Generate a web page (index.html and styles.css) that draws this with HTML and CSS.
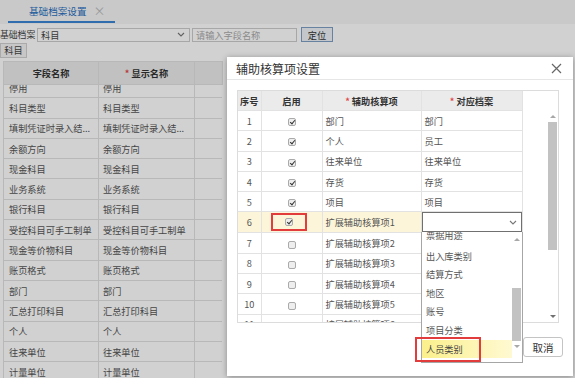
FILE: index.html
```html
<!DOCTYPE html>
<html lang="zh-CN">
<head>
    <meta charset="UTF-8">
    <meta name="viewport" content="width=device-width, initial-scale=1.0">
    <title>基础档案设置</title>
    <link rel="stylesheet" href="styles.css">
</head>
<body>
<div class="page">
    <div class="tabbar">
        <div class="tab">基础档案设置<span class="tab-x">×</span></div>
    </div>

    <div class="toolbar">
        <span class="label">基础档案</span>
        <div class="select">科目
            <svg width="8" height="5" viewBox="0 0 8 5"><path d="M1 1l3 3 3-3" fill="none" stroke="#777" stroke-width="1.1"/></svg>
        </div>
        <div class="search">请输入字段名称</div>
        <button class="btn-locate">定位</button>
    </div>

    <div class="subtabs"><span class="subtab">科目</span></div>

    <div class="grid">
        <table class="grid-head">
            <colgroup><col style="width:95px"><col style="width:96px"><col style="width:28px"></colgroup>
            <tr>
                <th>字段名称</th>
                <th><i class="req">*</i>显示名称</th>
                <th></th>
            </tr>
        </table>
        <div class="grid-body">
            <table>
                <colgroup><col style="width:95px"><col style="width:96px"><col style="width:28px"></colgroup>
                <tr><td>停用</td><td>停用</td><td></td></tr>
                <tr><td>科目类型</td><td>科目类型</td><td></td></tr>
                <tr><td>填制凭证时录入结...</td><td>填制凭证时录入结...</td><td></td></tr>
                <tr><td>余额方向</td><td>余额方向</td><td></td></tr>
                <tr><td>现金科目</td><td>现金科目</td><td></td></tr>
                <tr><td>业务系统</td><td>业务系统</td><td></td></tr>
                <tr><td>银行科目</td><td>银行科目</td><td></td></tr>
                <tr><td>受控科目可手工制单</td><td>受控科目可手工制单</td><td></td></tr>
                <tr><td>现金等价物科目</td><td>现金等价物科目</td><td></td></tr>
                <tr><td>账页格式</td><td>账页格式</td><td></td></tr>
                <tr><td>部门</td><td>部门</td><td></td></tr>
                <tr><td>汇总打印科目</td><td>汇总打印科目</td><td></td></tr>
                <tr><td>个人</td><td>个人</td><td></td></tr>
                <tr><td>往来单位</td><td>往来单位</td><td></td></tr>
                <tr><td>计量单位</td><td>计量单位</td><td></td></tr>
            </table>
        </div>
    </div>
</div>

<div class="mask"></div>

<div class="modal">
    <div class="modal-head">
        <span class="modal-title">辅助核算项设置</span>
        <svg class="modal-close" width="11" height="11" viewBox="0 0 11 11"><path d="M1 1l9 9M10 1l-9 9" stroke="#666" stroke-width="1.2"/></svg>
    </div>

    <div class="modal-body">
        <div class="assist">
            <table class="assist-table">
                <colgroup><col style="width:23px"><col style="width:61px"><col style="width:99px"><col style="width:101px"></colgroup>
                <tr>
                    <th>序号</th>
                    <th>启用</th>
                    <th><i class="req">*</i>辅助核算项</th>
                    <th><i class="req">*</i>对应档案</th>
                </tr>
                <tr><td class="num">1</td><td class="chk"><span class="cb on"></span></td><td>部门</td><td>部门</td></tr>
                <tr><td class="num">2</td><td class="chk"><span class="cb on"></span></td><td>个人</td><td>员工</td></tr>
                <tr><td class="num">3</td><td class="chk"><span class="cb on"></span></td><td>往来单位</td><td>往来单位</td></tr>
                <tr><td class="num">4</td><td class="chk"><span class="cb on"></span></td><td>存货</td><td>存货</td></tr>
                <tr><td class="num">5</td><td class="chk"><span class="cb on"></span></td><td>项目</td><td>项目</td></tr>
                <tr class="current">
                    <td class="num">6</td>
                    <td class="chk"><span class="mark-cb"><span class="cb on"></span></span></td>
                    <td>扩展辅助核算项1</td>
                    <td class="editing">
                        <div class="cell-select">
                            <svg width="8" height="5" viewBox="0 0 8 5"><path d="M1 1l3 3 3-3" fill="none" stroke="#777" stroke-width="1.1"/></svg>
                        </div>
                    </td>
                </tr>
                <tr><td class="num">7</td><td class="chk"><span class="cb"></span></td><td>扩展辅助核算项2</td><td></td></tr>
                <tr><td class="num">8</td><td class="chk"><span class="cb"></span></td><td>扩展辅助核算项3</td><td></td></tr>
                <tr><td class="num">9</td><td class="chk"><span class="cb"></span></td><td>扩展辅助核算项4</td><td></td></tr>
                <tr><td class="num">10</td><td class="chk"><span class="cb"></span></td><td>扩展辅助核算项5</td><td></td></tr>
                <tr><td class="num">11</td><td class="chk"><span class="cb"></span></td><td>扩展辅助核算项6</td><td></td></tr>
            </table>
            <div class="vscroll">
                <span class="arrow-up"></span>
                <span class="thumb"></span>
                <span class="fill"></span>
                <span class="arrow-down"></span>
            </div>
        </div>
    </div>

    <div class="modal-foot">
        <button class="btn">确定</button>
        <button class="btn">取消</button>
    </div>

    <div class="dropdown">
        <ul class="options">
            <li class="cut">票据用途</li>
            <li>出入库类别</li>
            <li>结算方式</li>
            <li>地区</li>
            <li>账号</li>
            <li>项目分类</li>
            <li class="hover">人员类别</li>
        </ul>
        <div class="dd-scroll">
            <span class="arrow-up"></span>
            <span class="dd-thumb"></span>
            <span class="arrow-down"></span>
        </div>
    </div>
    <div class="mark-option"></div>
</div>
</body>
</html>
```

FILE: styles.css
```css
*{
    margin: 0;
    padding: 0;
    box-sizing: border-box;
}

body{
    width: 575px;
    height: 378px;
    overflow: hidden;
    position: relative;
    background: #fff;
    color: #444;
    font-family: "Noto Sans CJK SC", "Noto Sans", sans-serif;
    font-size: 9.2px;
}

i.req{
    font-style: normal;
    color: #e04848;
    margin-right: 2px;
}

/* background page */

.page{
    width: 575px;
    height: 378px;
}

.tabbar{
    height: 24px;
    background: #f6f6f6;
    padding-left: 8px;
}

.tab{
    width: 107px;
    height: 23px;
    padding-left: 21px;
    border-bottom: 2px solid #3a86d6;
    color: #2a70c0;
    font-size: 9.6px;
    display: flex;
    align-items: center;
}

.tab-x{
    color: #bbb;
    font-size: 12px;
    margin-left: 7px;
}

.toolbar{
    height: 15px;
    margin-top: 3px;
    display: flex;
    align-items: center;
}

.label{
    width: 37px;
    font-size: 8.8px;
    white-space: nowrap;
}

.select{
    width: 153px;
    height: 14px;
    border: 1px solid #ccc;
    background: #fff;
    padding: 0 4px 0 3px;
    display: flex;
    align-items: center;
    justify-content: space-between;
}

.search{
    width: 105px;
    height: 14px;
    margin-left: 2px;
    border: 1px solid #ccc;
    background: #fff;
    color: #aaa;
    padding-left: 3px;
    line-height: 12px;
}

.btn-locate{
    width: 32px;
    height: 15px;
    margin-left: 4px;
    border: 1px solid #7e9fc4;
    background: #eef3f9;
    color: #333;
    font: inherit;
}

.subtabs{
    height: 15px;
    margin-top: 1px;
}

.subtab{
    display: inline-block;
    width: 27px;
    height: 15px;
    border: 1px solid #d0d0d0;
    background: #f3f3f3;
    text-align: center;
    line-height: 13px;
}

.grid{
    width: 219px;
    margin: 3px 0 0 3px;
}

.grid table{
    width: 219px;
    table-layout: fixed;
    border-collapse: collapse;
}

.grid th,
.grid td{
    border: 1px solid #e1e1e1;
    white-space: nowrap;
    overflow: hidden;
    line-height: 12px;
}

.grid-head th{
    height: 23px;
    background: #ececec;
    color: #333;
    font-weight: bold;
    text-align: center;
}

.grid-body{
    height: 294px;
    overflow: hidden;
}

.grid-body table{
    margin-top: -8px;
}

.grid-body td{
    height: 20.3px;
    padding-left: 5px;
    color: #555;
}

.grid-body td:nth-child(2){
    padding-left: 4px;
}

.mask{
    position: absolute;
    top: 0;
    left: 0;
    right: 0;
    bottom: 0;
    background: rgba(0, 0, 0, 0.18);
}

/* dialog */

.modal{
    position: absolute;
    left: 227px;
    top: 57px;
    width: 346px;
    height: 319px;
    background: #fff;
    box-shadow: 0 1px 6px rgba(0, 0, 0, 0.35);
}

.modal-head{
    height: 23px;
    border-bottom: 1px solid #e6e6e6;
    padding: 0 11px 0 9px;
    display: flex;
    align-items: center;
    justify-content: space-between;
}

.modal-title{
    font-size: 12px;
    color: #333;
}

.modal-body{
    padding: 10px 14px 0 10px;
}

.assist{
    height: 233px;
    border: 1px solid #dcdcdc;
    display: flex;
    overflow: hidden;
}

.assist-table{
    width: 284px;
    table-layout: fixed;
    border-collapse: collapse;
    align-self: flex-start;
}

.assist-table th,
.assist-table td{
    border: 1px solid #e2e2e2;
    white-space: nowrap;
    overflow: hidden;
    line-height: 12px;
}

.assist-table tr:first-child th{
    border-top: none;
}

.assist-table th:first-child,
.assist-table td:first-child{
    border-left: none;
}

.assist-table th{
    height: 19.5px;
    background: #ebebeb;
    color: #333;
    font-weight: bold;
    text-align: center;
}

.assist-table td{
    height: 20.3px;
    padding-left: 3px;
    color: #555;
}

.assist-table td.num{
    padding: 0;
    text-align: center;
}

.assist-table td.chk{
    padding: 0;
    text-align: center;
}

.assist-table tr.current td{
    background: #fdf5d9;
}

.assist-table td.editing{
    padding: 0;
    background: #fff;
}

.cell-select{
    height: 20px;
    border: 1px solid #707070;
    background: #fff;
    padding-right: 4px;
    display: flex;
    align-items: center;
    justify-content: flex-end;
}

.cb{
    display: inline-block;
    width: 8px;
    height: 8px;
    border: 1px solid #aaa;
    border-radius: 2px;
    background: #eee;
    vertical-align: middle;
    position: relative;
}

.cb.on::after{
    content: "";
    position: absolute;
    left: 2px;
    top: 0;
    width: 2px;
    height: 4px;
    border: solid #333;
    border-width: 0 1.2px 1.2px 0;
    transform: rotate(40deg);
}

.mark-cb{
    display: inline-flex;
    align-items: center;
    justify-content: center;
    width: 36px;
    height: 18px;
    margin-left: -5px;
    border: 2px solid #e23c3c;
    vertical-align: middle;
}

.vscroll{
    width: 9px;
    margin: 20px 1px 0 auto;
    display: flex;
    flex-direction: column;
    align-items: center;
}

.arrow-up,
.arrow-down{
    display: block;
    width: 0;
    height: 0;
    margin: 4px 0;
    border-left: 3px solid transparent;
    border-right: 3px solid transparent;
}

.arrow-up{
    border-bottom: 3px solid #a8a8a8;
}

.arrow-down{
    border-top: 3px solid #707070;
}

.thumb{
    display: block;
    width: 9px;
    height: 128px;
    background: #c2c2c2;
}

.fill{
    flex: 1;
}

.modal-foot{
    padding: 14px 10px 0 0;
    display: flex;
    justify-content: flex-end;
    gap: 5px;
}

.btn{
    width: 40px;
    height: 20px;
    border: 1px solid #c4c4c4;
    border-radius: 3px;
    background: #fff;
    color: #333;
    font: inherit;
    font-size: 10.5px;
}

/* open select list */

.dropdown{
    position: absolute;
    left: 194px;
    top: 175px;
    width: 102px;
    height: 131px;
    border: 1px solid #a6a6a6;
    border-top: none;
    background: #fff;
    display: flex;
}

.options{
    flex: 1;
    list-style: none;
    overflow: hidden;
}

.options li{
    height: 18.6px;
    line-height: 18.6px;
    padding-left: 4px;
    color: #555;
}

.options li.cut{
    height: 14.6px;
    line-height: 7px;
}

.options li.hover{
    background: linear-gradient(to right, #fbf08c, #fff9d2);
    color: #444;
}

.dd-scroll{
    width: 9px;
    margin-right: 1px;
    display: flex;
    flex-direction: column;
    align-items: center;
    padding-top: 2px;
}

.dd-scroll .arrow-up{
    margin-bottom: 0;
}

.dd-thumb{
    display: block;
    width: 9px;
    height: 53px;
    margin-top: 47px;
    background: #c2c2c2;
}

.dd-scroll .arrow-down{
    border-top-color: #a8a8a8;
}

.mark-option{
    position: absolute;
    left: 188px;
    top: 280px;
    width: 66px;
    height: 25px;
    border: 2px solid #e23c3c;
}
```
